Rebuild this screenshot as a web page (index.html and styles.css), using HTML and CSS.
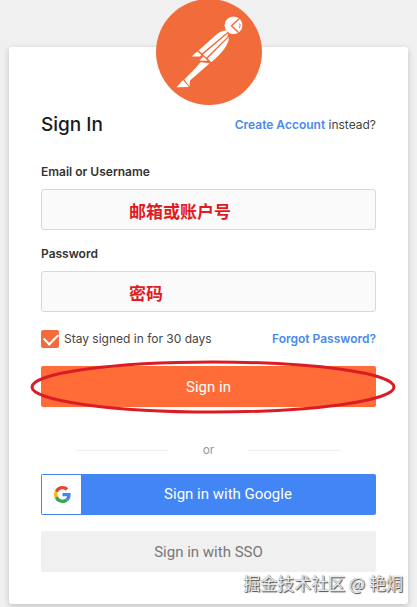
FILE: index.html
```
<!DOCTYPE html>
<html lang="en">
<head>
<meta charset="utf-8">
<meta name="viewport" content="width=device-width, initial-scale=1">
<title>Sign In</title>
<link rel="stylesheet" href="styles.css">
</head>
<body>
<main class="card">
	<svg class="logo" viewBox="0 0 106 106" aria-hidden="true">
		<circle cx="53" cy="53" r="53" fill="#f26b3a"/>
		<g fill="#fff">
			<circle cx="77.500" cy="26.300" r="8.900"/>
			<path d="M70.500 31.500 C65 31 60.500 35.500 56 39.500 L42.500 51.500 L46 54.300 L71.500 33Z"/>
			<path d="M72 34.200 L47 55.400 L50.500 58.600 L71.500 37.800Z"/>
			<path d="M72.700 38.300 L51.600 59.600 L55.500 63.300 C60 59 65.500 54 68.500 49.500 C71.500 45 73.200 41.500 72.700 38.300Z"/>
			<path d="M41.300 52.500 L35.500 57.600 L44 57.400 L45.400 56Z"/>
			<path d="M47.500 57.500 L43.500 61.600 L51.500 61.800Z"/>
			<path d="M44.500 63.200 L53.800 64.200 L34 81.500 L33.500 87.200 L28.300 80.500 C34 75 39.500 69 44.500 63.200Z"/>
			<path d="M27 81 L20.500 88.300 L33 88Z"/>
		</g>
		<g fill="none" stroke="#f26b3a">
			<path stroke-width="1.400" d="M84 19 L75.500 26.700 L82.500 33.500"/>
			<path stroke-width="1" d="M83.300 24.500 C84.500 26 84.300 27.800 83 29"/>
		</g>
	</svg>

	<form class="signin" action="#" method="post">
		<div class="row head">
			<h1>Sign In</h1>
			<p><a href="#">Create Account</a> instead?</p>
		</div>

		<label class="label" for="username">Email or Username</label>
		<div class="field">
			<input type="text" id="username" name="username">
			<span class="note">邮箱或账户号</span>
		</div>

		<label class="label" for="password">Password</label>
		<div class="field">
			<input type="password" id="password" name="password">
			<span class="note">密码</span>
		</div>

		<div class="row options">
			<label class="stay"><input type="checkbox" name="stay" checked> Stay signed in for 30 days</label>
			<a href="#">Forgot Password?</a>
		</div>

		<div class="submit">
			<button class="btn primary" type="submit">Sign in</button>
			<svg class="ring" viewBox="0 0 366 54" preserveAspectRatio="none" aria-hidden="true">
				<ellipse cx="183" cy="27" rx="181" ry="25"/>
			</svg>
		</div>

		<div class="or">or</div>

		<button class="btn google" type="button">
			<span class="google-icon">
				<svg viewBox="0 0 48 48" aria-hidden="true">
					<path fill="#ea4335" d="M24 9.500c3.540 0 6.710 1.220 9.210 3.600l6.850-6.850C35.900 2.380 30.470 0 24 0 14.620 0 6.510 5.380 2.560 13.220l7.980 6.190C12.430 13.720 17.740 9.500 24 9.500z"/>
					<path fill="#4285f4" d="M46.980 24.550c0-1.570-.15-3.090-.38-4.550H24v9.020h12.940c-.58 2.960-2.260 5.480-4.780 7.180l7.730 6c4.510-4.180 7.090-10.360 7.090-17.650z"/>
					<path fill="#fbbc05" d="M10.530 28.590c-.48-1.450-.76-2.990-.76-4.590s.27-3.140.76-4.590l-7.980-6.190C.92 16.460 0 20.120 0 24c0 3.880.92 7.540 2.560 10.780l7.970-6.190z"/>
					<path fill="#34a853" d="M24 48c6.480 0 11.930-2.130 15.890-5.810l-7.730-6c-2.150 1.450-4.920 2.300-8.160 2.300-6.260 0-11.570-4.220-13.470-9.910l-7.980 6.190C6.510 42.620 14.620 48 24 48z"/>
				</svg>
			</span>
			<span class="google-text">Sign in with Google</span>
		</button>
		<button class="btn sso" type="button">Sign in with SSO</button>
	</form>

	<div class="watermark">掘金技术社区 @ 艳烔</div>
</main>
</body>
</html>
```

FILE: styles.css
```
* { box-sizing: border-box; }
body {
	margin: 0;
	padding: 47px 9px 3px;
	background: #f0f0f0;
	color: #444;
	font-family: Inter, "Noto Sans CJK SC", sans-serif;
	font-size: 12px;
	line-height: 20px;
}
a { color: #4a8ae8; font-weight: 600; text-decoration: none; }

.card {
	position: relative;
	max-width: 480px;
	margin: 0 auto;
	padding: 66px 32px 32px;
	background: #fff;
	border-radius: 3px;
	box-shadow: 0 2px 6px rgba(0,0,0,0.2);
}
/* logo hangs over the top edge of the card */
.logo {
	position: absolute;
	top: -48px;
	left: calc(50% - 53px);
	width: 106px;
	height: 106px;
}

.signin { display: flex; flex-direction: column; }
.row {
	display: flex;
	justify-content: space-between;
	align-items: center;
}
.head { margin-bottom: 25px; }
.head p { margin: 0; }
h1 {
	margin: 0;
	color: #1a1a1a;
	font-size: 19px;
	font-weight: 500;
	line-height: 24px;
}

.label { margin-bottom: 7px; color: #333; font-weight: 600; }
.field { position: relative; margin-bottom: 14px; }
.field input {
	display: block;
	width: 100%;
	height: 41px;
	padding: 0 12px;
	border: 1px solid #d8d8d8;
	border-radius: 3px;
	background: #fafafa;
	font: inherit;
}
.note {
	position: absolute;
	top: 12px;
	left: 88px;
	color: #e01b22;
	font-family: "Noto Sans CJK SC", sans-serif;
	font-size: 17px;
	font-weight: 700;
	pointer-events: none;
}

.options { margin: 3px 0 17px; }
.stay { display: flex; align-items: center; gap: 5px; }
.stay input {
	appearance: none;
	position: relative;
	width: 18px;
	height: 18px;
	margin: 0;
	border-radius: 2px;
	background: #f26b3a;
}
.stay input:checked::after {
	content: "";
	position: absolute;
	top: 4px;
	left: 3px;
	width: 12px;
	height: 7px;
	border: solid #fff;
	border-width: 0 0 2px 2px;
	transform: translateY(-1px) rotate(-45deg);
}

.btn {
	display: block;
	width: 100%;
	height: 41px;
	padding: 0;
	border: 0;
	border-radius: 2px;
	font-family: Roboto, sans-serif;
	font-size: 15px;
}
.primary { background: #ff6c37; color: #fff; }
.submit { position: relative; }
.ring {
	position: absolute;
	top: -6px;
	left: -11px;
	width: calc(100% + 31px);
	height: 54px;
	pointer-events: none;
}
.ring ellipse { fill: none; stroke: #dc1c24; stroke-width: 3; }

.or {
	display: flex;
	align-items: center;
	gap: 34px;
	margin: 33px 35px 14px;
	color: #999;
}
.or::before, .or::after {
	content: "";
	flex: 1;
	height: 1px;
	background: #f0f0f0;
}

.google {
	display: flex;
	margin-bottom: 16px;
	padding: 1px;
	background: #4285f4;
	color: #fff;
}
.google-icon {
	display: flex;
	align-items: center;
	justify-content: center;
	width: 39px;
	height: 39px;
	padding-left: 2px;
	background: #fff;
}
.google-icon svg { width: 17px; height: 17px; }
.google-text { flex: 1; line-height: 39px; }
.sso { background: #f0f0f0; color: #777; }

.watermark {
	position: absolute;
	right: 5px;
	bottom: 11px;
	color: #e8e8e8;
	font-family: "Noto Sans CJK SC", sans-serif;
	font-size: 17px;
	text-shadow: 1px 1px 1px #444, 0 0 1px #777;
}
```
